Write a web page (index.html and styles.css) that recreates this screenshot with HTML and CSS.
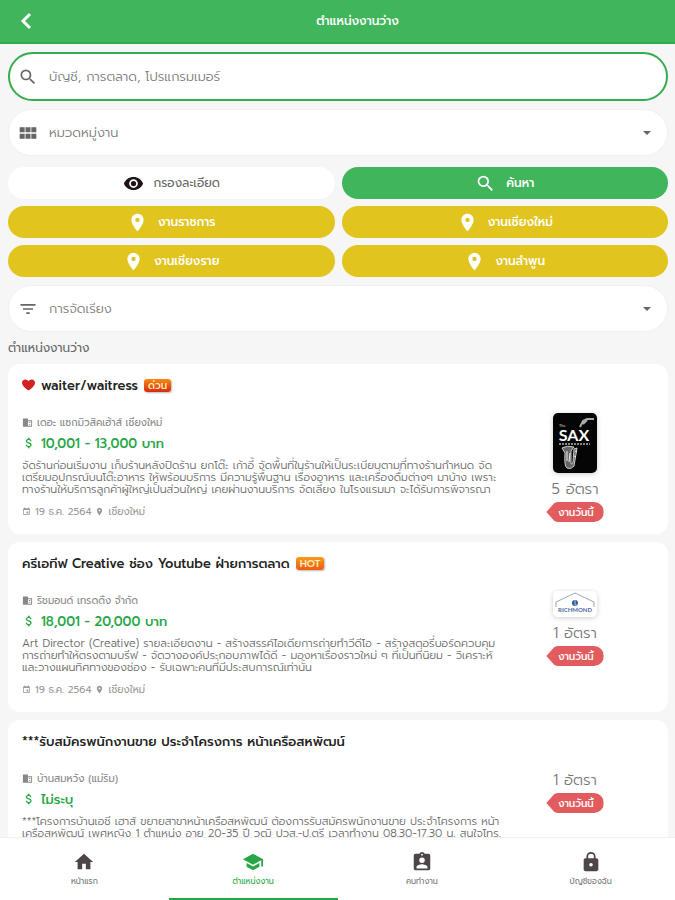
FILE: index.html
```html
<!DOCTYPE html>
<html lang="th">
<head>
	<meta charset="UTF-8">
	<meta name="viewport" content="width=device-width, initial-scale=1">

	<title>ตำแหน่งงานว่าง</title>

	<link rel="stylesheet" href="styles.css">
</head>
<body>

	<!-- Shared icons -->
	<svg class="sprite" aria-hidden="true">
		<symbol id="i-pin" viewBox="0 0 24 24"><path d="M12 2C8.13 2 5 5.13 5 9c0 5.25 7 13 7 13s7-7.75 7-13c0-3.87-3.13-7-7-7zm0 9.5a2.5 2.5 0 0 1 0-5 2.5 2.5 0 0 1 0 5z"/></symbol>
		<symbol id="i-search" viewBox="0 0 24 24"><path d="M15.5 14h-.79l-.28-.27A6.47 6.47 0 0 0 16 9.5 6.5 6.5 0 1 0 9.5 16c1.61 0 3.09-.59 4.23-1.57l.27.28v.79l5 4.99L20.49 19l-4.99-5zm-6 0C7.01 14 5 11.99 5 9.5S7.01 5 9.5 5 14 7.01 14 9.5 11.99 14 9.5 14z"/></symbol>
		<symbol id="i-building" viewBox="0 0 24 24"><path d="M2 3h11v18H2zM13 7h9v14h-9v-2h7V9h-7zM15 11h3v2h-3zM15 15h3v2h-3z"/></symbol>
		<symbol id="i-dollar" viewBox="0 0 24 24"><path d="M11.8 10.9c-2.27-.59-3-1.2-3-2.15 0-1.09 1.01-1.85 2.7-1.85 1.78 0 2.44.85 2.5 2.1h2.21c-.07-1.72-1.12-3.3-3.21-3.81V3h-3v2.16c-1.94.42-3.5 1.68-3.5 3.61 0 2.31 1.91 3.46 4.7 4.13 2.5.6 3 1.48 3 2.41 0 .69-.49 1.79-2.7 1.79-2.06 0-2.87-.92-2.98-2.1h-2.2c.12 2.19 1.76 3.42 3.68 3.83V21h3v-2.15c1.95-.37 3.5-1.5 3.5-3.55 0-2.84-2.43-3.81-4.7-4.4z"/></symbol>
		<symbol id="i-date" viewBox="0 0 24 24"><path d="M17 12h-5v5h5v-5zM16 1v2H8V1H6v2H5c-1.11 0-2 .9-2 2v14a2 2 0 0 0 2 2h14c1.1 0 2-.9 2-2V5c0-1.1-.9-2-2-2h-1V1h-2zm3 18H5V8h14v11z"/></symbol>
	</svg>

	<header class="topbar">
		<button class="back" type="button" aria-label="ย้อนกลับ">
			<svg viewBox="0 0 12 18"><path d="M10 2L3 9l7 7"/></svg>
		</button>
		<h1>ตำแหน่งงานว่าง</h1>
	</header>

	<main>
		<!-- Search form -->
		<form class="filters">
			<label class="field field-search">
				<svg class="icon"><use href="#i-search"/></svg>
				<input type="text" placeholder="บัญชี, การตลาด, โปรแกรมเมอร์" aria-label="ค้นหางาน">
			</label>
			<label class="field">
				<svg class="icon" viewBox="0 0 24 24"><path d="M2 5h6v6H2zM9 5h6v6H9zM16 5h6v6h-6zM2 13h6v6H2zM9 13h6v6H9zM16 13h6v6h-6z"/></svg>
				<select aria-label="หมวดหมู่งาน"><option>หมวดหมู่งาน</option></select>
				<span class="caret"></span>
			</label>
			<div class="buttons">
				<button class="btn btn-white" type="button">
					<svg class="icon" viewBox="0 0 24 24"><path d="M12 4.500C7 4.500 2.730 7.610 1 12c1.730 4.390 6 7.500 11 7.500s9.270-3.110 11-7.500c-1.730-4.390-6-7.500-11-7.500zM12 17a5 5 0 1 1 0-10 5 5 0 0 1 0 10zm0-8a3 3 0 1 0 0 6 3 3 0 0 0 0-6z"/></svg>
					กรองละเอียด
				</button>
				<button class="btn btn-green" type="button"><svg class="icon"><use href="#i-search"/></svg>ค้นหา</button>
				<button class="btn" type="button"><svg class="icon"><use href="#i-pin"/></svg>งานราชการ</button>
				<button class="btn" type="button"><svg class="icon"><use href="#i-pin"/></svg>งานเชียงใหม่</button>
				<button class="btn" type="button"><svg class="icon"><use href="#i-pin"/></svg>งานเชียงราย</button>
				<button class="btn" type="button"><svg class="icon"><use href="#i-pin"/></svg>งานลำพูน</button>
			</div>
			<label class="field">
				<svg class="icon" viewBox="0 0 24 24"><path d="M10 18h4v-2h-4v2zM3 6v2h18V6H3zm3 7h12v-2H6v2z"/></svg>
				<select aria-label="การจัดเรียง"><option>การจัดเรียง</option></select>
				<span class="caret"></span>
			</label>
		</form>

		<h2 class="list-title">ตำแหน่งงานว่าง</h2>

		<!-- Job list -->
		<article class="job">
			<div class="job-info">
				<h3>
					<svg class="heart" viewBox="0 0 14 12"><path d="M7 12C3 9 0 6.500 0 3.500 0 1.500 1.500 0 3.500 0 5 0 6.300.8 7 2c.7-1.200 2-2 3.500-2C12.500 0 14 1.500 14 3.500 14 6.500 11 9 7 12z"/></svg>
					waiter/waitress
					<span class="tag tag-urgent">ด่วน</span>
				</h3>
				<p class="company"><svg><use href="#i-building"/></svg>เดอะ แซกมิวสิคเฮ้าส์ เชียงใหม่</p>
				<p class="salary"><svg><use href="#i-dollar"/></svg>10,001 - 13,000 บาท</p>
				<p class="desc">จัดร้านก่อนเริ่มงาน เก็บร้านหลังปิดร้าน ยกโต๊ะ เก้าอี้ จัดพื้นที่ในร้านให้เป็นระเบียบตามที่ทางร้านกำหนด จัด<br>เตรียมอุปกรณ์บนโต๊ะอาหาร ให้พร้อมบริการ มีความรู้พื้นฐาน เรื่องอาหาร และเครื่องดื่มต่างๆ มาบ้าง เพราะ<br>ทางร้านให้บริการลูกค้าผู้ใหญ่เป็นส่วนใหญ่ เคยผ่านงานบริการ จัดเลี้ยง ในโรงแรมมา จะได้รับการพิจารณา</p>
				<p class="meta"><svg><use href="#i-date"/></svg>19 ธ.ค. 2564<svg><use href="#i-pin"/></svg>เชียงใหม่</p>
			</div>
			<div class="job-side">
				<svg class="logo logo-sax" viewBox="0 0 44 60">
					<rect width="44" height="60" fill="#050505"/>
					<text x="6" y="14" font-size="4" fill="#ddd">The</text>
					<text x="21" y="28" font-size="16" font-weight="700" text-anchor="middle" fill="#fff">SAX</text>
					<path d="M6 31h31" stroke="#888" stroke-width="2" stroke-dasharray="2 1"/>
					<path d="M27 14l3-6 4-2h7M30 11l4-4" fill="none" stroke="#aaa" stroke-width="2"/>
					<path d="M9 35q5-3 12-1l-3 4v12q1 3 2-1l1-13 3-1-3 18q-3 4-7 2-3-2-2-15z" fill="#666" stroke="#ccc" stroke-width="1"/>
					<path d="M14 38v10M17 40l-1 9M22 38l2 1M21 43l2 1" stroke="#eee" stroke-width="1"/>
				</svg>
				<p class="count">5 อัตรา</p>
				<a class="today" href="#">งานวันนี้</a>
			</div>
		</article>

		<article class="job">
			<div class="job-info">
				<h3>ครีเอทีฟ Creative ช่อง Youtube ฝ่ายการตลาด <span class="tag">HOT</span></h3>
				<p class="company"><svg><use href="#i-building"/></svg>ริชมอนด์ เทรดดิ้ง จำกัด</p>
				<p class="salary"><svg><use href="#i-dollar"/></svg>18,001 - 20,000 บาท</p>
				<p class="desc">Art Director (Creative) รายละเอียดงาน - สร้างสรรค์ไอเดียการถ่ายทำวีดีโอ - สร้างสตอรี่บอร์ดควบคุม<br>การถ่ายทำให้ตรงตามบรีฟ - จัดวางองค์ประกอบภาพได้ดี - มองหาเรื่องราวใหม่ ๆ ที่เป็นที่นิยม - วิเคราะห์<br>และวางแผนทิศทางของช่อง - รับเฉพาะคนที่มีประสบการณ์เท่านั้น</p>
				<p class="meta"><svg><use href="#i-date"/></svg>19 ธ.ค. 2564<svg><use href="#i-pin"/></svg>เชียงใหม่</p>
			</div>
			<div class="job-side">
				<svg class="logo" viewBox="0 0 44 26">
					<rect width="44" height="26" fill="#fff"/>
					<path d="M3 16v-5L22 2l19 9v5" fill="none" stroke="#99a5b8" stroke-width="1"/>
					<circle cx="22" cy="12" r="3" fill="#2e5b9c"/>
					<path d="M22 9v5h3" fill="none" stroke="#a9c6ee" stroke-width="1"/>
					<text x="22" y="21" font-size="6" font-weight="700" text-anchor="middle" fill="#4a6aa5">RICHMOND</text>
				</svg>
				<p class="count">1 อัตรา</p>
				<a class="today" href="#">งานวันนี้</a>
			</div>
		</article>

		<article class="job">
			<div class="job-info">
				<h3>***รับสมัครพนักงานขาย ประจำโครงการ หน้าเครือสหพัฒน์</h3>
				<p class="company"><svg><use href="#i-building"/></svg>บ้านสมหวัง (แม่ริม)</p>
				<p class="salary"><svg><use href="#i-dollar"/></svg>ไม่ระบุ</p>
				<p class="desc">***โครงการบ้านเอชี เฮาส์ ขยายสาขาหน้าเครือสหพัฒน์ ต้องการรับสมัครพนักงานขาย ประจำโครงการ หน้า<br>เครือสหพัฒน์ เพศหญิง 1 ตำแหน่ง อายุ 20-35 ปี วุฒิ ปวส.-ป.ตรี เวลาทำงาน 08.30-17.30 น. สนใจโทร.</p>
			</div>
			<div class="job-side">
				<p class="count">1 อัตรา</p>
				<a class="today" href="#">งานวันนี้</a>
			</div>
		</article>
	</main>

	<!-- Bottom tabs -->
	<nav class="tabs">
		<a href="#">
			<svg viewBox="0 0 24 24"><path d="M10 20v-6h4v6h5v-8h3L12 3 2 12h3v8z"/></svg>
			หน้าแรก
		</a>
		<a class="active" href="#">
			<svg viewBox="0 0 24 24"><path d="M5 13.180v4L12 21l7-3.820v-4L12 17l-7-3.820zM12 3L1 9l11 6 9-4.910V17h2V9L12 3z"/></svg>
			ตำแหน่งงาน
		</a>
		<a href="#">
			<svg viewBox="0 0 24 24"><path d="M19 3h-4.180C14.400 1.840 13.300 1 12 1s-2.400.84-2.820 2H5c-1.100 0-2 .9-2 2v14c0 1.100.9 2 2 2h14c1.100 0 2-.9 2-2V5c0-1.100-.9-2-2-2zm-7 0a1 1 0 1 1 0 2 1 1 0 0 1 0-2zm0 4a3 3 0 1 1 0 6 3 3 0 0 1 0-6zm6 12H6v-1.400c0-2 4-3.100 6-3.100s6 1.100 6 3.100V19z"/></svg>
			คนทำงาน
		</a>
		<a href="#">
			<svg viewBox="0 0 24 24"><path d="M18 8h-1V6A5 5 0 0 0 7 6v2H6c-1.100 0-2 .9-2 2v10c0 1.100.9 2 2 2h12c1.100 0 2-.9 2-2V10c0-1.100-.9-2-2-2zm-6 9a2 2 0 1 1 0-4 2 2 0 0 1 0 4zm3.100-9H8.900V6a3.100 3.100 0 0 1 6.200 0v2z"/></svg>
			บัญชีของฉัน
		</a>
	</nav>

</body>
</html>
```
FILE: styles.css
```css
* {
	box-sizing: border-box;
}
body {
	margin: 0;
	height: 100vh;
	display: flex;
	flex-direction: column;
	background-color: #f6f6f6;
	color: #666;
}
body, button, input, select {
	font-family: Prompt, Kanit, Inter, "Noto Sans Thai", "Noto Sans", sans-serif;
	font-size: 12px;
}
h1, h2, h3, p {
	margin: 0;
}
svg {
	flex: none;
	fill: currentColor;
}
a {
	text-decoration: none;
}
.sprite {
	display: none;
}

/* Top bar */
.topbar {
	flex: none;
	display: grid;
	grid-template-columns: 40px 1fr 40px;
	align-items: center;
	height: 44px;
	background-color: #41b55b;
	border-bottom: 2px solid #2aac4c;
	color: #fff;
}
.topbar h1 {
	font-size: 12px;
	font-weight: 500;
	text-align: center;
	padding-left: 40px;
}
.back {
	display: flex;
	padding: 0 0 0 20px;
	border: 0;
	background: none;
	color: #fff;
}
.back svg {
	width: 12px;
	height: 18px;
	fill: none;
	stroke: currentColor;
	stroke-width: 3;
}

/* Scrolling content */
main {
	flex: 1;
	min-height: 0;
	overflow-y: auto;
	scrollbar-width: none;
	padding: 8px 7px 8px 8px;
}
.icon {
	width: 20px;
	height: 20px;
}

/* Form fields */
.field {
	display: flex;
	align-items: center;
	gap: 11px;
	height: 47px;
	padding: 0 16px 0 9px;
	border: 1px solid #f1f1f1;
	border-radius: 24px;
	background-color: #fff;
}
.field-search {
	height: 49px;
	margin-bottom: 8px;
	padding-left: 8px;
	border: 2px solid #35ad4c;
	border-radius: 25px;
}
.field input, .field select {
	flex: 1;
	min-width: 0;
	height: 30px;
	padding: 0;
	border: 0;
	outline: none;
	background: none;
	color: #777;
	font-size: 13px;
	font-weight: 300;
	appearance: none;
}
.field input::placeholder {
	color: #777;
}
.caret {
	border: 4px solid transparent;
	border-top-color: #666;
	border-bottom: 0;
}

/* Buttons */
.buttons {
	display: grid;
	grid-template-columns: 1fr 1fr;
	gap: 7px;
	margin: 11px 0 8px;
}
.btn {
	display: flex;
	align-items: center;
	justify-content: center;
	gap: 10px;
	height: 32px;
	padding: 0;
	border: 0;
	border-radius: 16px;
	background-color: #e2c41f;
	color: #fff;
	font-weight: 500;
}
.btn .icon {
	width: 21px;
	height: 21px;
}
.btn-white {
	background-color: #fff;
	color: #666;
	font-weight: 400;
}
.btn-white .icon {
	color: #1d1416;
}
.btn-green {
	background-color: #41b55b;
}
.list-title {
	padding: 6px 0;
	font-size: 12px;
	font-weight: 400;
	line-height: 20px;
}

/* Job cards */
.job {
	display: grid;
	grid-template-columns: 3fr 1fr;
	min-height: 170px;
	margin-bottom: 8px;
	padding: 10px 14px 12px;
	border-radius: 12px;
	background-color: #fff;
}
.job-info {
	min-width: 0;
}
.job h3 {
	display: flex;
	align-items: center;
	gap: 6px;
	height: 22px;
	margin-bottom: 17px;
	color: #222;
	font-size: 13px;
	font-weight: 500;
	white-space: nowrap;
}
.heart {
	width: 13px;
	height: 12px;
	fill: #d32222;
}
.tag {
	padding: 0 4px;
	border-radius: 3px;
	background: linear-gradient(#fb9a1c, #ee5a12);
	box-shadow: 1px 1px 2px #bbb;
	color: #fff1c4;
	font-size: 10px;
	line-height: 13px;
}
.tag-urgent {
	background: linear-gradient(#f98b11, #dc2710);
}
.company, .salary, .meta {
	display: flex;
	align-items: center;
}
.company {
	height: 18px;
	gap: 4px;
	color: #888;
	font-size: 10px;
}
.company svg {
	width: 11px;
	height: 11px;
}
.salary {
	height: 24px;
	gap: 5px;
	color: #26a745;
	font-size: 13px;
	font-weight: 500;
}
.salary svg {
	width: 14px;
	height: 14px;
}
.desc {
	padding: 5px 0;
	color: #666;
	font-size: 11px;
	font-weight: 300;
	line-height: 12px;
	white-space: nowrap;
}
.meta {
	height: 20px;
	gap: 4px;
	color: #999;
	font-size: 10px;
}
.meta svg {
	width: 9px;
	height: 9px;
}
.job-side {
	display: flex;
	flex-direction: column;
	align-items: center;
	padding-top: 37px;
}
.logo {
	width: 44px;
	margin: 2px 0 3px;
	border-radius: 5px;
	box-shadow: 0 1px 5px #ccc;
	font-family: Lato, sans-serif;
}
.count {
	color: #777;
	font-size: 15px;
	font-weight: 300;
	line-height: 20px;
	padding: 3px 0;
}
.today {
	display: flex;
	align-items: center;
	height: 20px;
	padding: 0 10px 0 12px;
	border-radius: 0 10px 10px 0;
	background-color: #e25b5e;
	clip-path: polygon(0 50%, 8px 5%, 11px 0, 100% 0, 100% 100%, 11px 100%, 8px 95%);
	color: #fff;
	font-size: 10px;
	font-weight: 500;
}

/* Bottom tabs */
.tabs {
	flex: none;
	display: grid;
	grid-template-columns: repeat(4, 1fr);
	height: 63px;
	border-top: 1px solid #f0f0f0;
	background-color: #fff;
}
.tabs a {
	display: flex;
	flex-direction: column;
	align-items: center;
	padding-top: 13px;
	border-bottom: 2px solid transparent;
	color: #777;
	font-size: 8px;
	line-height: 16px;
}
.tabs svg {
	width: 22px;
	height: 22px;
	color: #4c4648;
}
.tabs .active, .tabs .active svg {
	color: #26a745;
}
.tabs .active {
	border-bottom-color: #26a745;
}
```
